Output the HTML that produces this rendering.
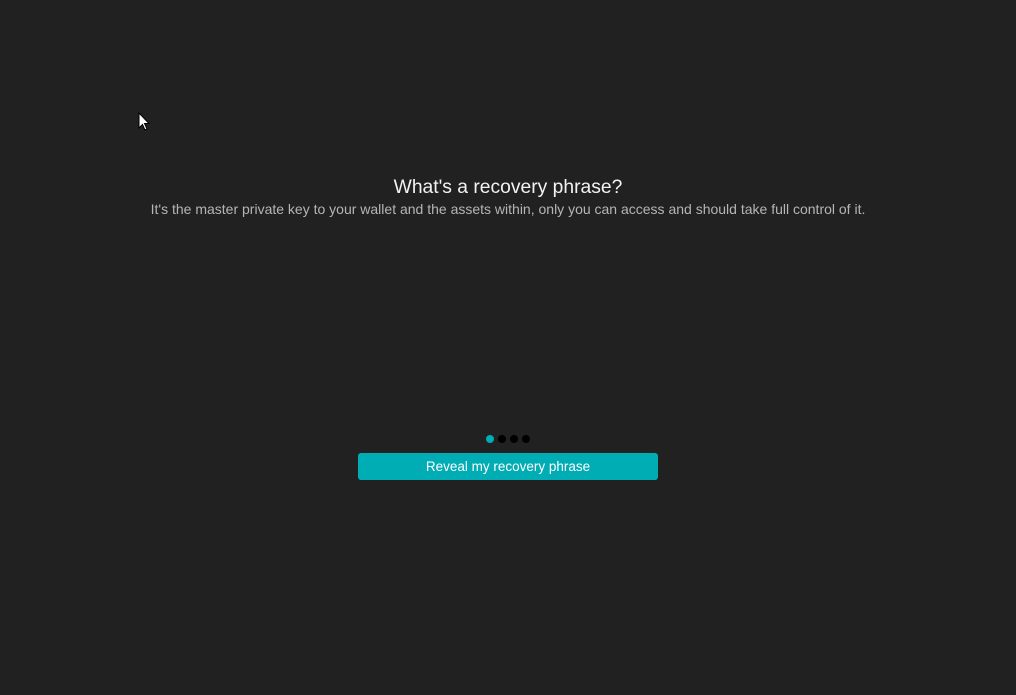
<!DOCTYPE html>
<html><head><meta charset="utf-8"><style>
html,body{margin:0;padding:0;width:1016px;height:695px;background:#212121;overflow:hidden;font-family:"Liberation Sans",sans-serif;}
.t{position:absolute;left:0;width:1016px;text-align:center;}
h1{position:absolute;left:0;width:1016px;top:177px;margin:0;text-align:center;font-weight:normal;font-size:19.3px;color:#f2f2f2;}
.sub{top:201px;font-size:14px;color:#b5b5b5;}
.dot{position:absolute;top:435px;width:8px;height:8px;border-radius:50%;background:#000;}
.btn{position:absolute;left:358px;top:453px;width:300px;height:27px;background:#00adb5;border-radius:3px;color:#fff;font-size:13.5px;text-align:center;line-height:28px;}
</style></head><body>
<svg style="position:absolute;left:138px;top:112px" width="12" height="20" viewBox="0 0 12 20"><path d="M1 1 L1 16 L4.5 12.5 L7 18 L9 17 L6.5 11.5 L11 11.5 Z" fill="#fff" stroke="#000" stroke-width="1"/></svg>
<h1>What's a recovery phrase?</h1>
<div class="t sub">It's the master private key to your wallet and the assets within, only you can access and should take full control of it.</div>
<div class="dot" style="left:486px;background:#00adb5"></div>
<div class="dot" style="left:498px"></div>
<div class="dot" style="left:510px"></div>
<div class="dot" style="left:522px"></div>
<div class="btn">Reveal my recovery phrase</div>
</body></html>
